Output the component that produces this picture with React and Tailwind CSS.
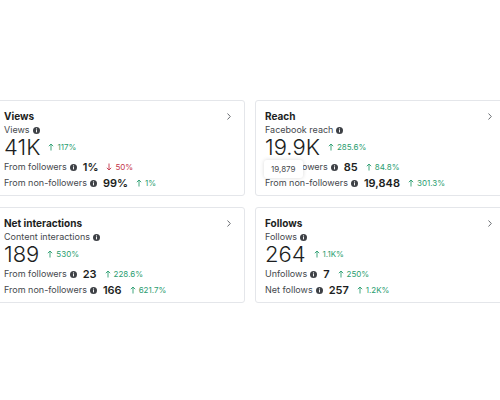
import React from "react";

const cards = [
  {
    title: "Views",
    label: "Views",
    value: "41K",
    change: "117%",
    rows: [
      { label: "From followers", value: "1%", change: "50%", down: true },
      { label: "From non-followers", value: "99%", change: "1%" },
    ],
  },
  {
    title: "Reach",
    label: "Facebook reach",
    value: "19.9K",
    change: "285.6%",
    tooltip: "19,879",
    rows: [
      { label: "From followers", value: "85", change: "84.8%" },
      { label: "From non-followers", value: "19,848", change: "301.3%" },
    ],
  },
  {
    title: "Net interactions",
    label: "Content interactions",
    value: "189",
    change: "530%",
    rows: [
      { label: "From followers", value: "23", change: "228.6%" },
      { label: "From non-followers", value: "166", change: "621.7%" },
    ],
  },
  {
    title: "Follows",
    label: "Follows",
    value: "264",
    change: "1.1K%",
    rows: [
      { label: "Unfollows", value: "7", change: "250%" },
      { label: "Net follows", value: "257", change: "1.2K%" },
    ],
  },
];

function Info() {
  return (
    <svg width="7" height="7" viewBox="0 0 12 12" className="inline-block">
      <circle cx="6" cy="6" r="6" fill="#3e4146" />
      <rect x="5.2" y="5" width="1.6" height="4.2" fill="#fff" />
      <circle cx="6" cy="3.3" r="0.95" fill="#fff" />
    </svg>
  );
}

function Change({ value, down }) {
  return (
    <span className={`flex items-center gap-[3px] text-[8px] ${down ? "text-[#c4364a]" : "text-[#2a9d6f]"}`}>
      <svg width="6" height="8" viewBox="0 0 6 8">
        {down ? (
          <path d="M3 0.5V7M0.8 4.8L3 7L5.2 4.8" stroke="currentColor" strokeWidth="0.9" fill="none" />
        ) : (
          <path d="M3 7.5V1M0.8 3.2L3 1L5.2 3.2" stroke="currentColor" strokeWidth="0.9" fill="none" />
        )}
      </svg>
      {value}
    </span>
  );
}

function Card({ card }) {
  return (
    <div className="relative h-[96px] rounded-[3px] border border-[#e4e6ea] bg-white pl-[9px] pr-[12px] pt-[8px]">
      <div className="flex items-center justify-between">
        <span className="text-[10px] font-bold leading-[14px] text-[#1c1e21]">{card.title}</span>
        <svg width="6" height="9" viewBox="0 0 6 9">
          <path d="M1.5 1.5L4.3 4.5L1.5 7.5" stroke="#6b6e73" strokeWidth="1" fill="none" />
        </svg>
      </div>
      <div className="mt-[1px] flex items-center gap-[3px] text-[9px] leading-[12px] text-[#45484d]">
        {card.label} <Info />
      </div>
      <div className="flex items-center gap-[8px] leading-[22px]">
        <span className="text-[22px] font-light text-[#1c1e21]">{card.value}</span>
        <Change value={card.change} />
      </div>
      <div className="mt-[3px] flex flex-col gap-[4px]">
        {card.rows.map((r) => (
          <div key={r.label} className="flex items-center gap-[3px] text-[9px] leading-[12px] text-[#45484d]">
            {r.label} <Info />
            <span className="ml-[3px] mr-[5px] text-[11px] font-semibold text-[#1c1e21]">{r.value}</span>
            <Change value={r.change} down={r.down} />
          </div>
        ))}
      </div>
      {card.tooltip ? (
        <div className="absolute left-[8px] top-[59px] rounded-[3px] bg-white px-[7px] py-[4px] text-[8px] leading-[10px] text-[#45484d] shadow-[0_0_4px_rgba(0,0,0,0.15)]">
          {card.tooltip}
        </div>
      ) : null}
    </div>
  );
}

export default function App() {
  return (
    <div className="h-[400px] w-[500px] overflow-hidden bg-white font-['Inter',sans-serif]">
      <div className="ml-[-6px] grid w-[512px] grid-cols-[251px_251px] gap-x-[10px] gap-y-[11px] pt-[100px]">
        {cards.map((c) => (
          <Card key={c.title} card={c} />
        ))}
      </div>
    </div>
  );
}
